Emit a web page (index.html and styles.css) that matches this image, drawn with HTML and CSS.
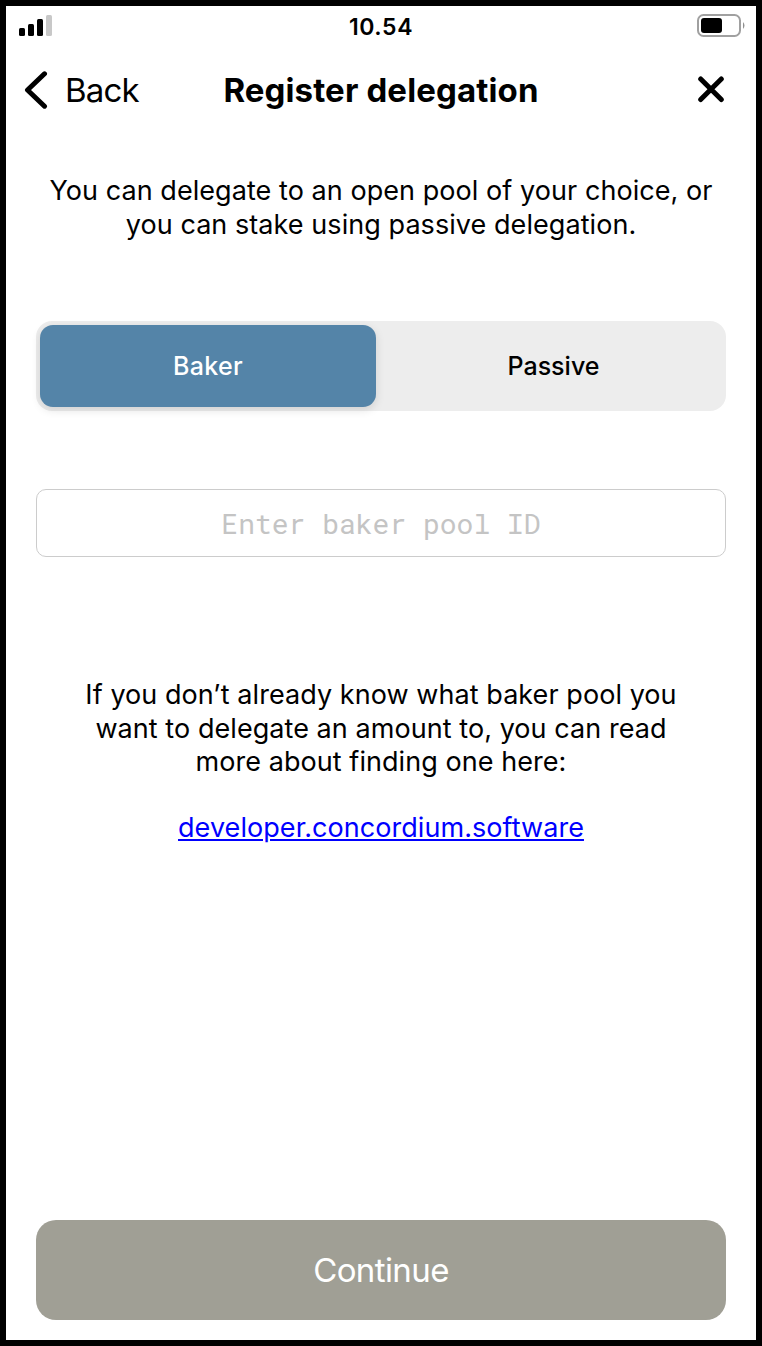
FILE: index.html
```html
<!DOCTYPE html>
<html lang="en">
<head>
<meta charset="utf-8">
<title>Register delegation</title>
<link rel="stylesheet" href="styles.css">
</head>
<body>
<div class="screen">
  <div class="status">
    <svg class="signal" width="34" height="22" viewBox="0 0 34 22"><rect x="0" y="13" width="6" height="8" rx="1.5"/><rect x="9" y="9" width="6" height="12" rx="1.5"/><rect x="18" y="4" width="6" height="17" rx="1.5"/><rect x="27" y="0" width="6" height="21" rx="1.5" fill="#c8c8c8"/></svg>
    <span class="time">10.54</span>
    <svg class="battery" width="50" height="24" viewBox="0 0 50 24"><rect x="2" y="1" width="42" height="21" rx="5.5" fill="none" stroke="#a0a0a0" stroke-width="2"/><rect x="5" y="4" width="21" height="15" rx="3"/><path d="M47 8q3 3.5 0 7z" fill="#909090"/></svg>
  </div>
  <header class="nav">
    <div class="back"><svg width="24" height="38" viewBox="0 0 24 38"><path d="M20.5 2.8L3.5 19L20.5 35.2" fill="none" stroke="#000" stroke-width="5" stroke-linecap="round" stroke-linejoin="round"/></svg><span class="back-label">Back</span></div>
    <h1 class="title">Register delegation</h1>
    <svg class="close" width="28" height="28" viewBox="0 0 28 28"><path d="M3.7 3L24.3 23.6M24.3 3L3.7 23.6" stroke="#000" stroke-width="5" stroke-linecap="round"/></svg>
  </header>
  <p class="copy intro">You can delegate to an open pool of your choice, or<br>you can stake using passive delegation.</p>
  <div class="segments"><div class="segment active">Baker</div><div class="segment passive">Passive</div></div>
  <div class="field">Enter baker pool ID</div>
  <p class="copy help">If you don’t already know what baker pool you<br>want to delegate an amount to, you can read<br>more about finding one here:</p>
  <a class="copy link" href="#">developer.concordium.software</a>
  <button class="continue">Continue</button>
</div>
</body>
</html>
```
FILE: styles.css
```css
* { box-sizing: border-box; }
body { margin: 0; font-family: Inter, "Liberation Sans", sans-serif; color: #000; }
.screen { width: 762px; height: 1346px; border: 6px solid #000; background: #fff; display: flex; flex-direction: column; overflow: hidden; }
.status { height: 40px; flex: none; display: grid; grid-template-columns: 1fr auto 1fr; align-items: center; padding: 0 10px 0 13px; }
.battery { justify-self: end; }
.time { font-size: 23px; font-weight: 600; letter-spacing: .6px; margin: 2px 3px 0 0; }
.nav { height: 83px; flex: none; display: grid; grid-template-columns: 1fr auto 1fr; align-items: center; padding: 5px 18px 0; }
.back { display: flex; align-items: center; gap: 17px; font-size: 33px; letter-spacing: -.8px; }
.title { margin: 0; font-size: 33px; font-weight: 700; letter-spacing: .13px; }
.close { justify-self: end; margin-right: 13px; }
.copy { margin: 0; font-size: 27px; line-height: 33.5px; letter-spacing: .06px; text-align: center; white-space: nowrap; }
.intro { margin-top: 45px; }
.segments { margin: 80px 30px 0; height: 90px; flex: none; padding: 4px; border-radius: 16px; background: #ededed; display: grid; grid-template-columns: 336px 1fr; }
.segment { display: grid; place-items: center; font-size: 25px; font-weight: 500; border-radius: 13px; letter-spacing: .3px; }
.passive { padding-left: 9px; letter-spacing: 0; }
.active { color: #fff; background: #5484a8; box-shadow: 0 3px 10px #0000001f; }
.field { margin: 78px 30px 0; height: 68px; flex: none; border: 1px solid #ccc; border-radius: 10px; display: grid; place-items: center; color: #c4c4c4; font: 28px "Roboto Mono", "DejaVu Sans Mono", monospace; }
.help { margin-top: 121px; }
.link { margin-top: 32px; align-self: center; color: #00f; text-decoration: underline; }
.continue { margin: auto 30px 20px; height: 100px; flex: none; border: 0; border-radius: 20px; background: #a09f95; color: #fff; font: 33px Inter, sans-serif; letter-spacing: -.6px; }
```
